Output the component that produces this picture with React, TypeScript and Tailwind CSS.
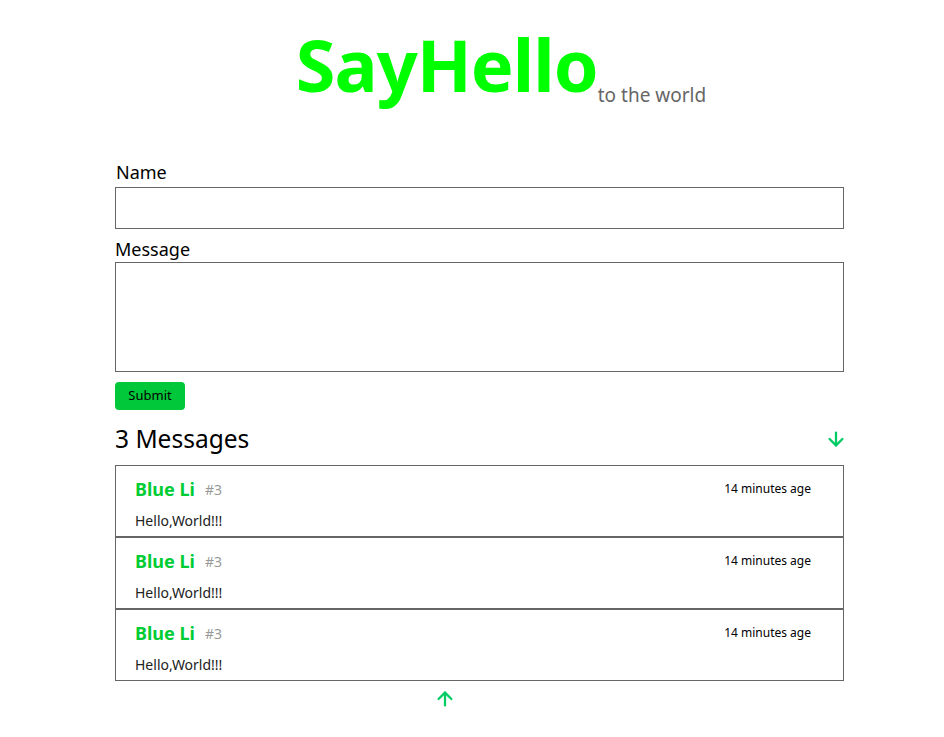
import { ArrowDown, ArrowUp } from "lucide-react";

const messages = [
  { name: "Blue Li", id: 3, time: "14 minutes age", text: "Hello,World!!!" },
  { name: "Blue Li", id: 3, time: "14 minutes age", text: "Hello,World!!!" },
  { name: "Blue Li", id: 3, time: "14 minutes age", text: "Hello,World!!!" },
];

function MessageItem({ m }: { m: (typeof messages)[number] }) {
  return (
    <div className="border border-[#666] h-[72px] px-[19px] pt-[12px]">
      <div className="flex items-center h-[22px]">
        <span className="text-[18px] font-bold text-[#00cc33]">{m.name}</span>
        <span className="ml-[10px] text-[14px] text-[#999]">#{m.id}</span>
        <span className="ml-auto mr-[13px] text-[12px] text-black">{m.time}</span>
      </div>
      <p className="mt-[10px] text-[14px] text-[#222]">{m.text}</p>
    </div>
  );
}

export default function App() {
  return (
    <div className="min-h-screen bg-white font-['Noto_Sans','Open_Sans',sans-serif] text-black">
      <header className="flex justify-center items-end pt-[22px] pl-[58px]">
        <h1 className="text-[72px] leading-[84px] font-bold text-[#00ff00] tracking-[-1px]">SayHello</h1>
        <span className="text-[19px] text-[#666] mb-[-3px] ml-0">to the world</span>
      </header>

      <main className="ml-[115px] w-[729px] mt-[54px]">
        <label className="block text-[18px] leading-[24px] pl-px">Name</label>
        <input className="block w-full h-[42px] border border-[#666] mt-[3px]" />
        <label className="block text-[18px] leading-[24px] mt-[8px]">Message</label>
        <textarea className="block w-full h-[110px] border border-[#666] mt-[1px] resize-none" />
        <button className="mt-[10px] h-[28px] w-[70px] rounded bg-[#00c83a] text-[13px]">Submit</button>

        <div className="flex items-center justify-between mt-[11px] h-[36px]">
          <h2 className="text-[24.5px]">3 Messages</h2>
          <ArrowDown className="text-[#00cc66] mr-[-3px]" size={22} strokeWidth={2.5} />
        </div>

        <div className="mt-[8px]">
          {messages.map((m, i) => (
            <MessageItem key={i} m={m} />
          ))}
        </div>

        <div className="flex justify-center pr-[70px] mt-[7px]">
          <ArrowUp className="text-[#00cc66]" size={22} strokeWidth={2.5} />
        </div>
      </main>
    </div>
  );
}
